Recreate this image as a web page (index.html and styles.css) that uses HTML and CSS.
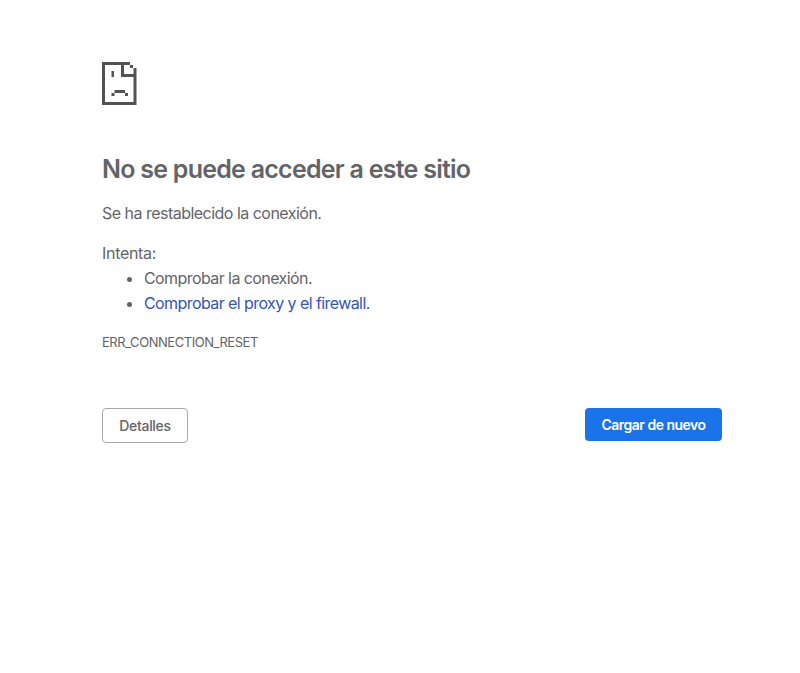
FILE: index.html
```
<!DOCTYPE html>
<html lang="es">
<head>
<meta charset="utf-8">
<title>No se puede acceder a este sitio</title>
<link rel="stylesheet" href="styles.css">
</head>
<body>
<div class="interstitial">
	<svg class="icon" viewBox="0 0 35 43">
		<path fill="#535353" fill-rule="evenodd" d="M0 0h28v3h3v3h3.5v37H0zM3 3v37h28.500V15H19V3zM22 3v9h9.500V6H28V3z"/>
		<path fill="#535353" d="M9.500 9h2.500v6H9.500zM12.500 28h10.500v3H12.500zM9.500 31h3v3h-3zM23 31h3v3h-3z"/>
	</svg>
	<h1>No se puede acceder a este sitio</h1>
	<p class="summary">Se ha restablecido la conexión.</p>
	<div class="suggestions">
		<p class="intro">Intenta:</p>
		<ul>
			<li>Comprobar la conexión.</li>
			<li><a href="#">Comprobar el proxy y el firewall.</a></li>
		</ul>
	</div>
	<div class="error-code">ERR_CONNECTION_RESET</div>
	<div class="buttons">
		<button class="details">Detalles</button>
		<button class="reload">Cargar de nuevo</button>
	</div>
</div>
</body>
</html>
```
FILE: styles.css
```
body{margin:0;background:#fff;color:#646468;font:16px/25px Inter,sans-serif;}
h1,p,ul{margin:0;padding:0;}
.interstitial{width:620px;margin:0 0 0 102px;padding-top:62px;}
.icon{display:block;width:35px;height:43px;}
h1{margin-top:48px;font-size:25px;line-height:32px;font-weight:600;letter-spacing:-0.75px;white-space:nowrap;}
.summary{margin-top:16px;letter-spacing:-0.52px;}
.suggestions{margin-top:15px;letter-spacing:-0.58px;}
.intro{letter-spacing:-0.3px;}
.suggestions ul{padding-left:42px;}
a{color:#3156b5;text-decoration:none;}
.error-code{margin-top:16px;font-size:13px;line-height:20px;letter-spacing:-0.46px;}
.buttons{display:flex;justify-content:space-between;align-items:flex-start;margin-top:56px;}
button{box-sizing:border-box;margin:0;padding:0;border-radius:4px;font:500 14px/20px Inter,sans-serif;letter-spacing:-0.33px;}
.details{width:86px;height:35px;border:1px solid #a5a8ac;background:#fff;color:#646468;}
.reload{width:137px;height:33px;border:0;background:#1a73e8;color:#fff;font-weight:600;letter-spacing:-0.5px;}
```
